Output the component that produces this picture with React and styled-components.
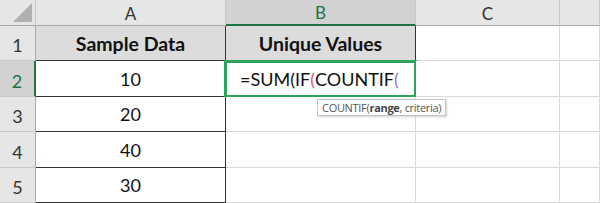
import React from 'react';
import styled, { createGlobalStyle, css } from 'styled-components';

const GlobalStyle = createGlobalStyle`
  html, body {
    margin: 0;
    padding: 0;
    background: #fff;
    overflow: hidden;
  }
`;

const Sheet = styled.div`
  display: grid;
  grid-template-columns: 36px 190px 190px 144px 40px;
  grid-template-rows: 26px 35px 36px 35px 36px 35px;
  width: 600px;
  height: 203px;
  font-family: Lato, 'Open Sans', sans-serif;
  color: #111;
`;

const Corner = styled.div`
  position: relative;
  background: #e6e6e6;
  border-right: 1px solid #c8c8c8;
  border-bottom: 1px solid #a9a9a9;
  box-sizing: border-box;

  &::after {
    content: '';
    position: absolute;
    right: 3px;
    bottom: 3px;
    width: 0;
    height: 0;
    border-left: 19px solid transparent;
    border-bottom: 19px solid #b0b0b0;
  }
`;

const ColHead = styled.div`
  display: flex;
  align-items: center;
  justify-content: center;
  box-sizing: border-box;
  background: ${p => (p.$active ? '#d2d2d2' : '#e6e6e6')};
  color: ${p => (p.$active ? '#217346' : '#333')};
  border-right: 1px solid #c8c8c8;
  border-bottom: ${p => (p.$active ? '2px solid #217346' : '1px solid #a9a9a9')};
  font-size: 17px;
  padding-top: 1px;
`;

const RowHead = styled.div`
  display: flex;
  align-items: flex-end;
  justify-content: center;
  padding-bottom: 4px;
  box-sizing: border-box;
  background: ${p => (p.$active ? '#d2d2d2' : '#e6e6e6')};
  color: ${p => (p.$active ? '#217346' : '#333')};
  border-right: ${p => (p.$active ? '2px solid #217346' : '1px solid #a9a9a9')};
  border-bottom: 1px solid #c8c8c8;
  font-size: 18px;
`;

const Cell = styled.div`
  position: relative;
  display: flex;
  align-items: center;
  justify-content: ${p => (p.$left ? 'flex-start' : 'center')};
  padding-left: ${p => (p.$left ? '14px' : '0')};
  box-sizing: border-box;
  background: ${p => (p.$head ? '#dcdcdc' : '#fff')};
  font-size: ${p => (p.$head ? '19.5px' : '18px')};
  font-weight: ${p => (p.$head ? 700 : 400)};
  white-space: nowrap;
  border-right: 1px solid #d9d9d9;
  border-bottom: 1px solid #d9d9d9;
  ${p =>
    p.$boxed &&
    css`
      border-right-color: #333;
      border-bottom-color: #333;
    `}
`;

const Selection = styled.div`
  position: absolute;
  left: -2px;
  top: -1px;
  right: -2px;
  bottom: -2px;
  border: 3px solid #2ea35c;
  pointer-events: none;
`;

const Paren = styled.span`
  color: ${p => p.$color};
`;

const Tip = styled.div`
  position: absolute;
  left: 91px;
  top: 38px;
  z-index: 2;
  height: 15px;
  padding: 0 4px;
  display: flex;
  align-items: center;
  background: #fff;
  border: 1px solid #c6c6c6;
  box-shadow: 1px 1px 2px rgba(0, 0, 0, 0.18);
  font-family: 'Open Sans', sans-serif;
  font-size: 11px;
  letter-spacing: -0.3px;
  font-weight: 400;
  color: #555;

  b {
    font-weight: 700;
    color: #444;
  }
`;

const values = [10, 20, 40, 30];
const cols = ['A', 'B', 'C', ''];

export default function App() {
  return (
    <>
      <GlobalStyle />
      <Sheet>
        <Corner />
        {cols.map(c => (
          <ColHead key={c || 'd'} $active={c === 'B'}>
            {c}
          </ColHead>
        ))}

        <RowHead>1</RowHead>
        <Cell $head $boxed>Sample Data</Cell>
        <Cell $head $boxed>Unique Values</Cell>
        <Cell />
        <Cell />

        {values.map((v, i) => (
          <React.Fragment key={v}>
            <RowHead $active={i === 0}>{i + 2}</RowHead>
            <Cell $boxed>{v}</Cell>
            {i === 0 ? (
              <Cell $left>
                =SUM(IF<Paren $color="#e0557a">(</Paren>COUNTIF
                <Paren $color="#9b6bd6">(</Paren>
                <Selection />
                <Tip>
                  COUNTIF(<b>range</b>, criteria)
                </Tip>
              </Cell>
            ) : (
              <Cell />
            )}
            <Cell />
            <Cell />
          </React.Fragment>
        ))}
      </Sheet>
    </>
  );
}
